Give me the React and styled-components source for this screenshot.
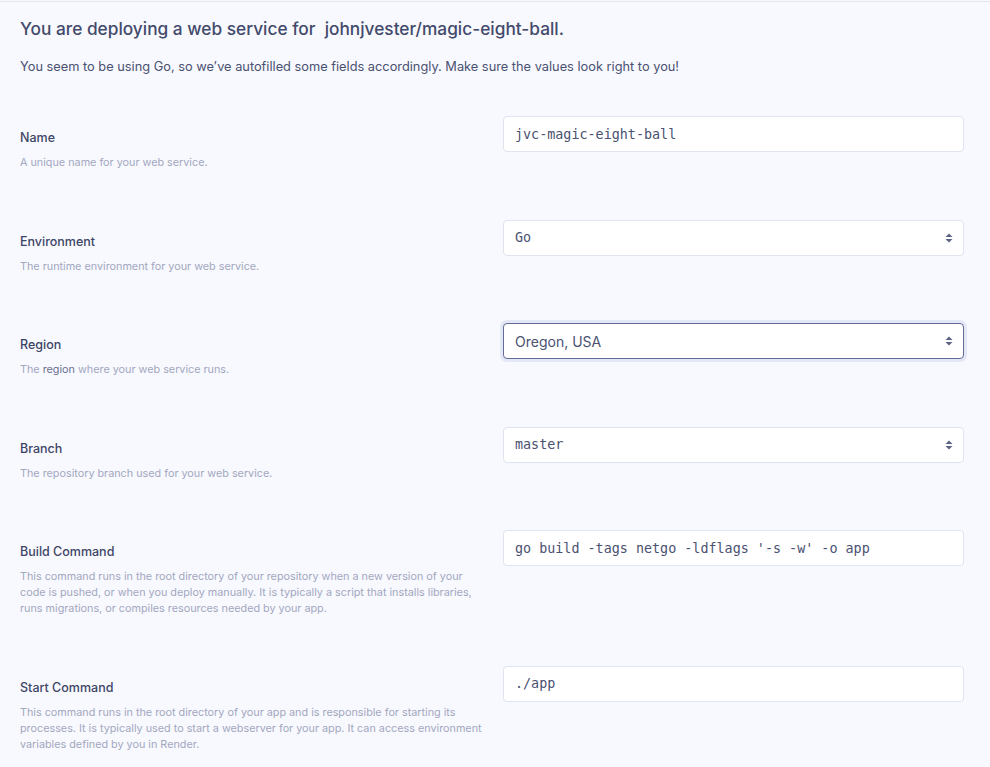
import React from 'react'
import styled, { createGlobalStyle } from 'styled-components'

const GlobalStyle = createGlobalStyle`
  body {
    margin: 0;
    background: #f8f9fe;
    font-family: Inter, "Noto Sans", sans-serif;
    -webkit-font-smoothing: antialiased;
  }
`;

const Page = styled.div`
  border-top: 1px solid #e4e6f1;
  margin-top: 1px;
  padding: 0 26px 0 20px;
`;

const Heading = styled.h1`
  margin: 0;
  padding-top: 15px;
  font-size: 17.3px;
  line-height: 24px;
  font-weight: 500;
  color: #434a6b;
  white-space: pre;
`;

const Intro = styled.p`
  margin: 17px 0 0;
  font-size: 12.8px;
  line-height: 18px;
  color: #4a5171;
`;

const Rows = styled.div`
  margin-top: 40px;
  display: flex;
  flex-direction: column;
  gap: 48.5px;
`;

const Row = styled.div`
  display: grid;
  grid-template-columns: 483px 1fr;
`;

const Info = styled.div`
  padding-top: 12px;
`;

const Label = styled.div`
  font-size: 12.5px;
  line-height: 20px;
  font-weight: 500;
  color: #3e4566;
`;

const Help = styled.div`
  margin-top: 7px;
  font-size: 10.8px;
  line-height: 16px;
  color: #a2a7c0;
  max-width: 464px;

  b {
    font-weight: 400;
    color: #6a7091;
  }
`;

const Field = styled.div`
  position: relative;
  box-sizing: border-box;
  height: 36px;
  display: flex;
  align-items: center;
  padding: 0 11px;
  background: #fff;
  border: 1px solid ${p => (p.$focus ? '#646b96' : '#e0e3f0')};
  box-shadow: ${p => (p.$focus ? '0 0 0 3px rgba(214, 218, 240, 0.6)' : 'none')};
  border-radius: 4px;
  color: #4a5171;
  font-family: ${p => (p.$mono ? '"DejaVu Sans Mono", monospace' : 'Inter, "Noto Sans", sans-serif')};
  font-size: ${p => (p.$mono ? '13.4px' : '14px')};
  white-space: pre;
`;

const Arrows = styled.svg`
  position: absolute;
  right: 10px;
  top: 50%;
  margin-top: -5px;
`;

function SelectArrows() {
  return (
    <Arrows width="8" height="10" viewBox="0 0 8 10">
      <path d="M4 0.5 L7.5 4 H0.5 Z" fill="#5c6384" />
      <path d="M4 9.5 L7.5 6 H0.5 Z" fill="#5c6384" />
    </Arrows>
  )
}

const fields = [
  { label: 'Name', help: 'A unique name for your web service.', value: 'jvc-magic-eight-ball', mono: true },
  { label: 'Environment', help: 'The runtime environment for your web service.', value: 'Go', mono: true, select: true },
  {
    label: 'Region',
    help: (<>The <b>region</b> where your web service runs.</>),
    value: 'Oregon, USA',
    select: true,
    focus: true,
  },
  { label: 'Branch', help: 'The repository branch used for your web service.', value: 'master', mono: true, select: true },
  {
    label: 'Build Command',
    help: 'This command runs in the root directory of your repository when a new version of your code is pushed, or when you deploy manually. It is typically a script that installs libraries, runs migrations, or compiles resources needed by your app.',
    value: "go build -tags netgo -ldflags '-s -w' -o app",
    mono: true,
  },
  {
    label: 'Start Command',
    help: 'This command runs in the root directory of your app and is responsible for starting its processes. It is typically used to start a webserver for your app. It can access environment variables defined by you in Render.',
    value: './app',
    mono: true,
  },
]

export default function App() {
  return (
    <Page>
      <GlobalStyle />
      <Heading>You are deploying a web service for  johnjvester/magic-eight-ball.</Heading>
      <Intro>
        You seem to be using Go, so we’ve autofilled some fields accordingly. Make sure the values look right to you!
      </Intro>
      <Rows>
        {fields.map(f => (
          <Row key={f.label}>
            <Info>
              <Label>{f.label}</Label>
              <Help>{f.help}</Help>
            </Info>
            <div>
              <Field $mono={f.mono} $focus={f.focus}>
                {f.value}
                {f.select && <SelectArrows />}
              </Field>
            </div>
          </Row>
        ))}
      </Rows>
    </Page>
  )
}
